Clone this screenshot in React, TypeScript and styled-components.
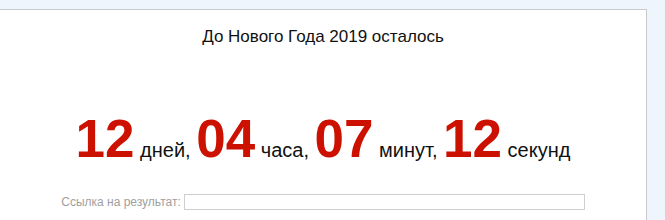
import React from "react";
import styled, { createGlobalStyle } from "styled-components";

const Global = createGlobalStyle`
  html, body { margin: 0; padding: 0; background: #eff5fd; }
  body { font-family: "Liberation Sans", Arial, sans-serif; }
`;

const Page = styled.div`
  padding-top: 9px;
  height: 220px;
  box-sizing: border-box;
  overflow: hidden;
`;

const Panel = styled.div`
  width: 647px;
  height: 211px;
  box-sizing: border-box;
  background: #ffffff;
  border-top: 1px solid #c9c9c9;
  border-right: 1px solid #c9c9c9;
  text-align: center;
  padding-top: 17px;
`;

const Title = styled.div`
  font-size: 17px;
  line-height: 20px;
  color: #111;
`;

const Countdown = styled.div`
  margin-top: 62px;
  font-size: 20px;
  line-height: 60px;
  color: #111;
  white-space: nowrap;
`;

const Num = styled.b`
  font-size: 53px;
  font-weight: bold;
  color: #cc1100;
`;

const LinkRow = styled.div`
  margin-top: 14px;
  display: flex;
  justify-content: center;
  align-items: center;
  gap: 3px;
`;

const Label = styled.span`
  font-size: 12px;
  color: #a0a0a0;
`;

const Field = styled.input`
  width: 401px;
  height: 16px;
  box-sizing: border-box;
  border: 1px solid #cfcfcf;
  margin: 0;
  padding: 0 2px;
  background: #fff;
`;

const parts: [string, string][] = [
  ["12", "дней,"],
  ["04", "часа,"],
  ["07", "минут,"],
  ["12", "секунд"],
];

export default function App() {
  return (
    <>
      <Global />
      <Page>
        <Panel>
          <Title>До Нового Года 2019 осталось</Title>
          <Countdown>
            {parts.map(([n, w], i) => (
              <React.Fragment key={i}>
                <Num>{n}</Num> {w}
                {i < parts.length - 1 ? " " : ""}
              </React.Fragment>
            ))}
          </Countdown>
          <LinkRow>
            <Label>Ссылка на результат:</Label>
            <Field type="text" readOnly />
          </LinkRow>
        </Panel>
      </Page>
    </>
  );
}
